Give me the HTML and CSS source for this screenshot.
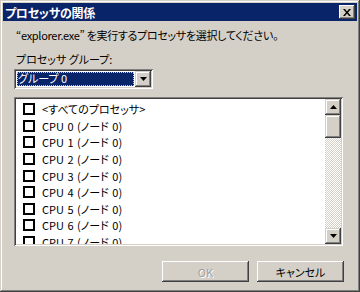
FILE: index.html
```html
<!DOCTYPE html>
<html lang="ja">
<head>
    <meta charset="UTF-8">
    <title>プロセッサの関係</title>
    <link rel="stylesheet" href="styles.css">
</head>
<body>
    <div class="window">
        <div class="titlebar">
            <span class="title">プロセッサの関係</span>
            <span class="close">
                <svg width="8" height="7" viewBox="0 0 8 7"><path d="M0 0h2l2 2.5L6 0h2L5 3.5 8 7H6L4 4.5 2 7H0l3-3.5z" fill="#000"/></svg>
            </span>
        </div>

        <div class="content">
            <p class="intro">“explorer.exe” を実行するプロセッサを選択してください。</p>
            <p class="label">プロセッサ グループ:</p>

            <!-- グループ選択 -->
            <div class="combo">
                <div class="combo-value"><span>グループ 0</span></div>
                <div class="combo-btn">
                    <svg width="7" height="4" viewBox="0 0 7 4"><path d="M0 0h7L3.5 4z" fill="#000"/></svg>
                </div>
            </div>

            <!-- プロセッサ一覧 -->
            <div class="listbox">
                <ul class="items">
                    <li><span class="check"></span>&lt;すべてのプロセッサ&gt;</li>
                    <li><span class="check"></span>CPU 0 (ノード 0)</li>
                    <li><span class="check"></span>CPU 1 (ノード 0)</li>
                    <li><span class="check"></span>CPU 2 (ノード 0)</li>
                    <li><span class="check"></span>CPU 3 (ノード 0)</li>
                    <li><span class="check"></span>CPU 4 (ノード 0)</li>
                    <li><span class="check"></span>CPU 5 (ノード 0)</li>
                    <li><span class="check"></span>CPU 6 (ノード 0)</li>
                    <li><span class="check"></span>CPU 7 (ノード 0)</li>
                </ul>
                <div class="scrollbar">
                    <div class="sb-btn">
                        <svg width="7" height="4" viewBox="0 0 7 4"><path d="M3.5 0L7 4H0z" fill="#000"/></svg>
                    </div>
                    <div class="sb-thumb"></div>
                    <div class="sb-track"></div>
                    <div class="sb-btn">
                        <svg width="7" height="4" viewBox="0 0 7 4"><path d="M0 0h7L3.5 4z" fill="#000"/></svg>
                    </div>
                </div>
            </div>

            <div class="buttons">
                <button class="btn" disabled>OK</button>
                <button class="btn">キャンセル</button>
            </div>
        </div>
    </div>
</body>
</html>
```

FILE: styles.css
```css
body {
    margin: 0;
    background: #d4d0c8;
    font-family: "Noto Sans CJK JP", "Liberation Sans", sans-serif;
    font-size: 11px;
    font-feature-settings: "palt";
    color: #000;
}
.window {
    width: 360px;
    height: 292px;
    box-sizing: border-box;
    padding: 3px;
    background: #d4d0c8;
    box-shadow: inset -1px -1px #404040, inset 1px 1px #d4d0c8,
                inset -2px -2px #808080, inset 2px 2px #fff;
}
.titlebar {
    height: 18px;
    background: #0a246a;
    display: flex;
    align-items: center;
    justify-content: space-between;
    padding: 0 2px 0 2px;
}
.title {
    color: #fff;
    font-weight: bold;
    font-size: 12px;
    letter-spacing: -0.3px;
}
.close {
    width: 16px;
    height: 14px;
    box-sizing: border-box;
    background: #d4d0c8;
    display: flex;
    align-items: center;
    justify-content: center;
    box-shadow: inset -1px -1px #404040, inset 1px 1px #fff,
                inset -2px -2px #808080;
}
.content {
    padding: 0 0 0 11px;
}
.intro {
    margin: 7px 0 0 2px;
    height: 14px;
    line-height: 14px;
    letter-spacing: -0.3px;
}
.label {
    margin: 10px 0 0 2px;
    height: 14px;
    line-height: 14px;
}
.combo {
    margin-top: 3px;
    width: 139px;
    height: 20px;
    box-sizing: border-box;
    padding: 2px;
    background: #fff;
    display: flex;
    box-shadow: inset 1px 1px #808080, inset -1px -1px #fff,
                inset 2px 2px #404040, inset -2px -2px #d4d0c8;
}
.combo-value {
    flex: 1;
    padding: 1px;
}
.combo-value span {
    display: block;
    height: 14px;
    line-height: 13px;
    box-sizing: border-box;
    background: #0a246a;
    color: #fff;
    padding-left: 1px;
    outline: 1px dotted #d8c878;
    outline-offset: -1px;
}
.combo-btn {
    width: 16px;
    height: 16px;
    box-sizing: border-box;
    background: #d4d0c8;
    display: flex;
    align-items: center;
    justify-content: center;
    box-shadow: inset -1px -1px #404040, inset 1px 1px #d4d0c8,
                inset -2px -2px #808080, inset 2px 2px #fff;
}
.listbox {
    margin-top: 8px;
    width: 329px;
    height: 149px;
    box-sizing: border-box;
    padding: 2px;
    background: #fff;
    display: flex;
    overflow: hidden;
    box-shadow: inset 1px 1px #808080, inset -1px -1px #fff,
                inset 2px 2px #404040, inset -2px -2px #d4d0c8;
}
.items {
    flex: 1;
    list-style: none;
    margin: 0;
    padding: 2px 0 0 7px;
    overflow: hidden;
}
.items li {
    height: 16.6px;
    display: flex;
    align-items: center;
    gap: 7px;
    white-space: nowrap;
    word-spacing: 1px;
}
.check {
    width: 12px;
    height: 12px;
    box-sizing: border-box;
    border: 2px solid #000;
    background: #fff;
    flex: none;
}
.scrollbar {
    width: 16px;
    display: flex;
    flex-direction: column;
}
.sb-btn, .sb-thumb {
    height: 16px;
    box-sizing: border-box;
    background: #d4d0c8;
    display: flex;
    align-items: center;
    justify-content: center;
    box-shadow: inset -1px -1px #404040, inset 1px 1px #d4d0c8,
                inset -2px -2px #808080, inset 2px 2px #fff;
}
.sb-thumb {
    height: 23px;
}
.sb-track {
    flex: 1;
    background: repeating-conic-gradient(#fff 0 25%, #d4d0c8 0 50%) 0 0 / 2px 2px;
}
.buttons {
    margin: 15px 0 0 148px;
    display: flex;
    gap: 8px;
}
.btn {
    width: 87px;
    height: 21px;
    padding: 0;
    border: none;
    background: #d4d0c8;
    font: inherit;
    color: #000;
    box-shadow: inset -1px -1px #404040, inset 1px 1px #fff,
                inset -2px -2px #808080;
}
.btn:disabled {
    color: #a0a0a0;
    text-shadow: 1px 1px #fff;
}
```
